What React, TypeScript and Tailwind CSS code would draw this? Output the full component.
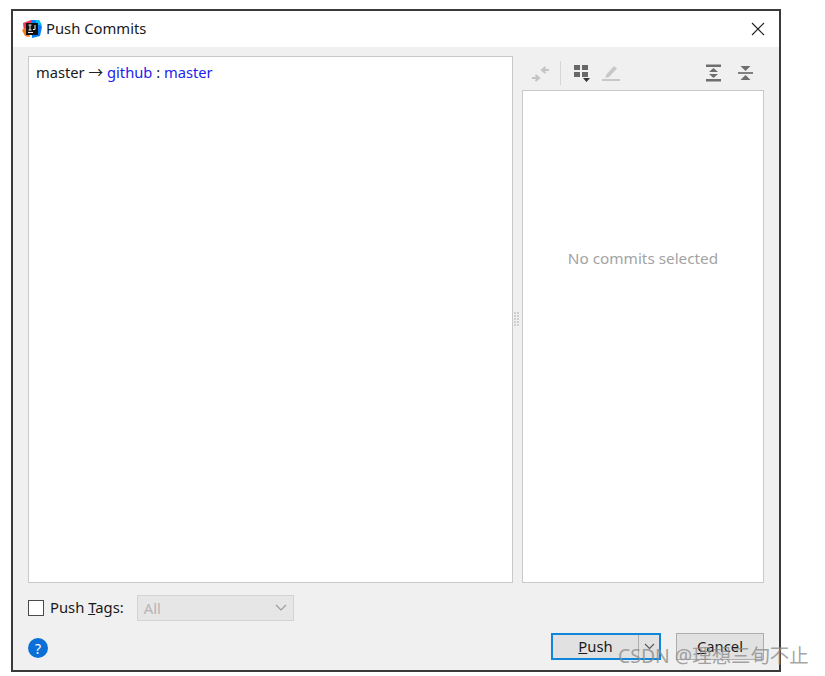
import React from 'react';

const font = { fontFamily: '"Noto Sans", "Noto Sans CJK SC", sans-serif' };

const IdeaLogo = () => (
  <svg width="20" height="20" viewBox="0 0 20 20" className="shrink-0">
    <path d="M1 4 L9 1 L11 8 L5 18 L2 13 Z" fill="#f5365c" />
    <path d="M0 11 L5 8 L8 18 L3 17 Z" fill="#f97a12" />
    <path d="M9 1 L17 1 L20 8 L18 17 L10 19 Z" fill="#087cfa" />
    <path d="M13 1 L17 1 L20 6 L16 6 Z" fill="#07c3f2" />
    <rect x="4" y="4" width="12" height="12" fill="#111" />
    <rect x="6" y="13" width="5" height="1" fill="#eee" />
    <path d="M6.5 6 H9.5 M8 6 V11 M6.5 11 H9.5 M13 6 V10.5 H11" stroke="#eee" strokeWidth="1" fill="none" />
  </svg>
);

const Toolbar = () => (
  <div className="flex items-center h-[34px] pl-[8px] pr-[9px]">
    {/* collapse arrows */}
    <svg width="22" height="22" viewBox="0 0 22 22" className="shrink-0">
      <path d="M2 16 H8 M5.5 13 L9 16 L5.5 19" stroke="#c4c4c4" strokeWidth="2" fill="none" />
      <path d="M19 8 H13 M15.5 5 L12 8 L15.5 11" stroke="#c4c4c4" strokeWidth="2" fill="none" />
    </svg>
    <div className="w-px h-[24px] bg-[#d6d6d6] ml-[8px] mr-[12px]" />
    {/* group by */}
    <svg width="20" height="20" viewBox="0 0 20 20" className="shrink-0">
      <rect x="1" y="2" width="6" height="5" fill="#686868" />
      <rect x="9" y="2" width="6" height="5" fill="#686868" />
      <rect x="1" y="9" width="6" height="5" fill="#686868" />
      <rect x="9" y="9" width="6" height="5" fill="#686868" />
      <path d="M10 15 H17 L13.5 19 Z" fill="#333" />
    </svg>
    {/* edit */}
    <svg width="20" height="20" viewBox="0 0 20 20" className="shrink-0 ml-[8px]">
      <path d="M5 12 L13 3 L16 5.5 L8 14 L4.5 15 Z" fill="#c8c8c8" />
      <rect x="1" y="16" width="18" height="2" fill="#c8c8c8" />
    </svg>
    <div className="flex-1" />
    {/* expand all */}
    <svg width="18" height="20" viewBox="0 0 18 20" className="shrink-0">
      <rect x="1" y="1.5" width="15" height="2.5" fill="#6e6e6e" />
      <rect x="1" y="16" width="15" height="2.5" fill="#6e6e6e" />
      <path d="M8.5 5 L13 9 H4 Z" fill="#6e6e6e" />
      <path d="M8.5 15 L13 11 H4 Z" fill="#6e6e6e" />
    </svg>
    {/* collapse all */}
    <svg width="18" height="20" viewBox="0 0 18 20" className="shrink-0 ml-[14px]">
      <rect x="1" y="9" width="15" height="2" fill="#808080" />
      <path d="M3.5 3 H13.5 L8.5 8 Z" fill="#6e6e6e" />
      <path d="M3.5 17 H13.5 L8.5 12 Z" fill="#6e6e6e" />
    </svg>
  </div>
);

export default function App() {
  return (
    <div className="relative w-[825px] h-[676px] bg-white overflow-hidden text-[#1a1a1a]" style={font}>
      <div className="ml-[11px] mt-[9px] w-[770px] h-[663px] border-2 border-[#3a3a3a] flex flex-col bg-[#f0f0f0]">
        {/* title bar */}
        <div className="h-[36px] bg-white flex items-center pl-[9px] pr-[14px] shrink-0">
          <IdeaLogo />
          <span className="ml-[4px] text-[14.8px] mt-[-1px]">Push Commits</span>
          <div className="flex-1" />
          <svg width="14" height="14" viewBox="0 0 14 14">
            <path d="M1 1 L13 13 M13 1 L1 13" stroke="#222" strokeWidth="1.1" fill="none" />
          </svg>
        </div>

        {/* main split */}
        <div className="flex h-[527px] mt-[9px] ml-[15px] mr-[15px] shrink-0">
          <div className="w-[485px] bg-white border border-[#c9c9c9] pl-[7px] pt-[5px] text-[14.7px] leading-[20px] whitespace-nowrap">
            master <span className="text-[#222]">→</span> <span className="text-[#2222f0]">github</span> : <span className="text-[#2222f0]">master</span>
          </div>
          <div className="w-[9px] flex items-center justify-center">
            <div className="grid grid-cols-2 gap-[1px] w-[5px] mt-[-1px] ml-[-3px]">
              {Array.from({ length: 10 }).map((_, i) => (
                <div key={i} className="w-[2px] h-[2px] bg-[#cfcfcf]" />
              ))}
            </div>
          </div>
          <div className="flex-1 flex flex-col">
            <Toolbar />
            <div className="flex-1 bg-white border border-[#c9c9c9] flex items-center justify-center pb-[156px]">
              <span className="text-[15.3px] text-[#a3a3a3]">No commits selected</span>
            </div>
          </div>
        </div>

        {/* push tags */}
        <div className="flex items-center h-[26px] mt-[12px] ml-[15px] shrink-0">
          <div className="w-[16px] h-[16px] bg-white border border-[#4a4a4a]" />
          <span className="ml-[6px] text-[14.8px] mt-[-1px]">
            Push <span className="underline">T</span>ags:
          </span>
          <div className="ml-[13px] w-[157px] h-[26px] bg-[#e6e6e6] border border-[#d4d4d4] flex items-center pl-[6px] pr-[6px]">
            <span className="text-[14.8px] text-[#b5b5b5]">All</span>
            <div className="flex-1" />
            <svg width="12" height="8" viewBox="0 0 12 8">
              <path d="M1 1 L6 6 L11 1" stroke="#9a9a9a" strokeWidth="1.1" fill="none" />
            </svg>
          </div>
        </div>

        {/* footer */}
        <div className="flex items-center mt-[12px] ml-[15px] mr-[15px] h-[27px] shrink-0">
          <div className="w-[20px] h-[20px] rounded-full bg-[#0a6fd6] text-white flex items-center justify-center text-[14px] mt-[3px]">?</div>
          <div className="flex-1" />
          <div className="w-[110px] h-[27px] border-2 border-[#0f86dc] bg-[#e1e1e1] flex items-center">
            <div className="w-[85px] h-full flex items-center justify-center text-[14.8px]">
              <span><span className="underline">P</span>ush</span>
            </div>
            <div className="w-px h-full bg-[#adadad]" />
            <div className="flex-1 flex items-center justify-center">
              <svg width="11" height="7" viewBox="0 0 11 7">
                <path d="M1 1 L5.5 5.5 L10 1" stroke="#555" strokeWidth="1.1" fill="none" />
              </svg>
            </div>
          </div>
          <div className="ml-[15px] w-[88px] h-[27px] border border-[#adadad] bg-[#e1e1e1] flex items-center justify-center text-[14.8px]">
            <span><span className="underline">C</span>ancel</span>
          </div>
        </div>
      </div>

      {/* CSDN watermark */}
      <div className="absolute left-[618px] top-[644px] text-[19.4px] leading-[24px] text-[#8c8c8c]/80 whitespace-nowrap">
        CSDN @理想三旬不止
      </div>
    </div>
  );
}
